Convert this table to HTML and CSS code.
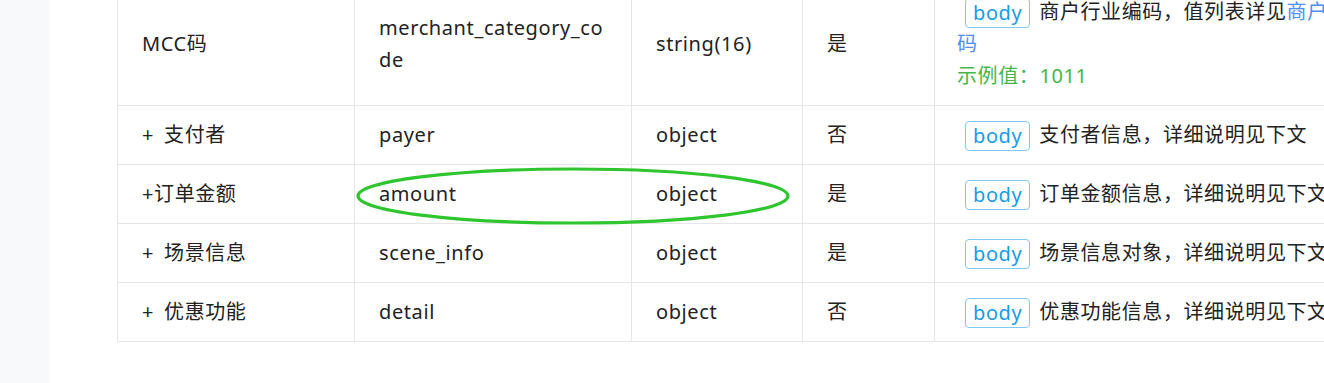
FILE: index.html
```html
<!DOCTYPE html>
<html lang="zh-CN">
<head>
<meta charset="utf-8">
<title>参数表</title>
<link rel="stylesheet" href="styles.css">
</head>
<body>
<div class="page">
  <aside class="sidebar"></aside>
  <main class="content">
    <table class="params">
      <colgroup>
        <col class="c-name">
        <col class="c-key">
        <col class="c-type">
        <col class="c-req">
        <col class="c-desc">
      </colgroup>
      <tbody>
        <tr>
          <td>MCC码</td>
          <td class="key">merchant_category_co<wbr>de</td>
          <td>string(16)</td>
          <td>是</td>
          <td><span class="tag">body</span>商户行业编码，值列表详见<a class="link" href="#">商户行业编码</a><br><span class="example">示例值：1011</span></td>
        </tr>
        <tr>
          <td><span class="plus">+</span>支付者</td>
          <td>payer</td>
          <td>object</td>
          <td>否</td>
          <td><span class="tag">body</span>支付者信息，详细说明见下文</td>
        </tr>
        <tr>
          <td>+订单金额</td>
          <td>amount</td>
          <td>object</td>
          <td>是</td>
          <td><span class="tag">body</span>订单金额信息，详细说明见下文</td>
        </tr>
        <tr>
          <td><span class="plus">+</span>场景信息</td>
          <td>scene_info</td>
          <td>object</td>
          <td>是</td>
          <td><span class="tag">body</span>场景信息对象，详细说明见下文</td>
        </tr>
        <tr>
          <td><span class="plus">+</span>优惠功能</td>
          <td>detail</td>
          <td>object</td>
          <td>否</td>
          <td><span class="tag">body</span>优惠功能信息，详细说明见下文</td>
        </tr>
      </tbody>
    </table>
  </main>
  <svg class="mark" width="440" height="62" viewBox="0 0 440 62" aria-hidden="true">
    <ellipse cx="218" cy="30" rx="215" ry="27" fill="none" stroke="#2fc52f" stroke-width="3.2"/>
  </svg>
</div>
</body>
</html>
```
FILE: styles.css
```css
html, body {
  margin: 0;
  padding: 0;
  height: 100%;
  overflow: hidden;
  background: #ffffff;
}

.page {
  position: relative;
  display: flex;
  height: 383px;
  width: 1324px;
  overflow: hidden;
  font-family: "Noto Sans", "Noto Sans CJK SC", sans-serif;
  font-size: 20px;
  letter-spacing: 0.6px;
  color: #222222;
}

.sidebar {
  flex: 0 0 50px;
  background: #f8f9fb;
}

.content {
  flex: 0 0 auto;
  padding-left: 67px;
  margin-top: -17px;
}

.params {
  border-collapse: collapse;
  table-layout: fixed;
  width: 1304px;
}

.c-name { width: 237px; }
.c-key { width: 277px; }
.c-type { width: 171px; }
.c-req { width: 132px; }
.c-desc { width: 487px; }

.params td {
  box-sizing: border-box;
  height: 59px;
  border: 1px solid #e6e6e6;
  padding: 13px 23px 13px 24px;
  line-height: 32px;
  vertical-align: middle;
  text-align: left;
}

.params tr:first-child td {
  border-top: none;
}

.params td:last-child {
  padding-left: 22px;
}

.key {
  word-break: normal;
}

.plus {
  margin-right: 10px;
}

.tag {
  display: inline-block;
  box-sizing: border-box;
  height: 30px;
  line-height: 27px;
  padding: 0 7px;
  margin: 2px 9px 0 8px;
  border: 1px solid #80c9f0;
  border-radius: 4px;
  color: #1a9be4;
  vertical-align: top;
}

.link {
  color: #4e8ff0;
  text-decoration: none;
}

.example {
  color: #45b648;
}

.mark {
  position: absolute;
  left: 355px;
  top: 166px;
}
```
